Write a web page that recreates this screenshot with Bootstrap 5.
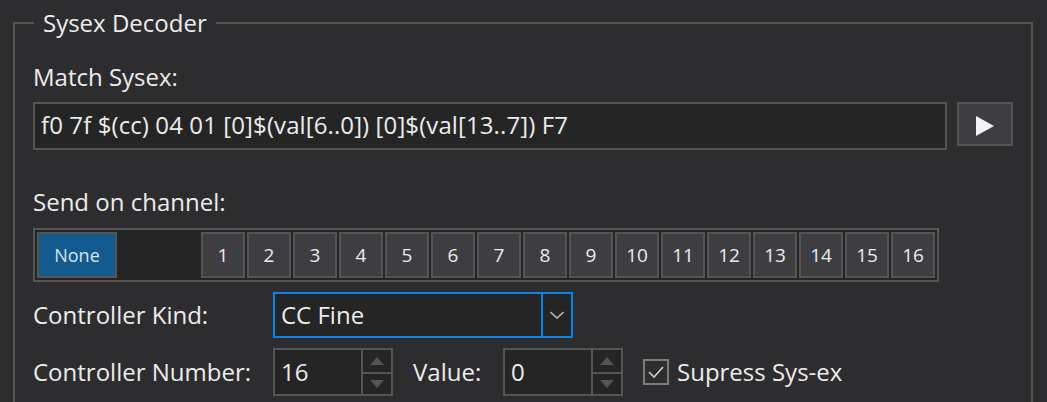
<!DOCTYPE html>
<html lang="en">
<head>
<meta charset="utf-8">
<title>Sysex Decoder</title>
<link href="https://cdn.jsdelivr.net/npm/bootstrap@5.3.0/dist/css/bootstrap.min.css" rel="stylesheet">
<style>
html,body{height:402px;overflow:hidden}
body{background:#2d2d30;color:#ececec;font-family:"Open Sans","Noto Sans",sans-serif;font-size:24px;line-height:32px}
.sx-panel{margin:7px 14px 0 13px;border:2px solid #555;padding:0 18px;height:500px;min-width:0}
.sx-panel legend{float:none;width:auto;margin:0 0 0 1px;padding:0 9px;font-size:24px;line-height:32px;color:#ececec}
.sx-label{line-height:32px;margin:0}
.sx-match-label{margin-top:22px;margin-bottom:9px}
.sx-box{background:#252526;border:2px solid #555;border-radius:0;color:#ececec;font-size:24px;line-height:32px;padding:0}
.sx-match-row{height:48px;gap:10px}
.sx-match{width:914px;height:48px;padding:5px 6px;box-shadow:none;letter-spacing:.1px}
.sx-play{width:56px;height:44px;background:#3e3e42;border:2px solid #555;border-radius:0;padding:0}
.sx-play svg{display:block;margin-top:4px}
.sx-channel-label{margin-top:36px;margin-bottom:10px}
.sx-bar{width:906px;height:54px;background:#252526;border:2px solid #555;padding:2px;gap:2px}
.sx-ch{width:44px;height:46px;background:#3e3e42;border:2px solid #555;border-radius:0;padding:0;color:#ececec;font-size:19px;line-height:24px}
.sx-none{width:80px;background:#135a8f;color:#d5e3ef;font-size:18px;margin-right:82px}
.sx-row1{margin-top:10px;height:46px}
.sx-row2{margin-top:10px;height:48px}
.sx-kind-label{width:240px}
.sx-combo{width:300px;height:46px;background:#252526;border:2px solid #0a84e8}
.sx-combo-text{padding:5px 6px;line-height:32px}
.sx-combo-btn{width:30px;border-left:2px solid #0a84e8}
.sx-spin{width:120px;height:48px;background:#252526;border:2px solid #555}
.sx-spin-text{padding:6px 6px;line-height:32px}
.sx-spin-btns{width:30px;border-left:2px solid #555}
.sx-spin-btns>div{height:50%}
.sx-spin-btns>div+div{border-top:2px solid #555}
.sx-value{width:90px;margin-left:20px}
.sx-check{width:26px;height:26px;border:2px solid #7a7a7a;background:#2d2d30;margin:0 8px 0 20px;padding:0}
</style>
</head>
<body>
<fieldset class="sx-panel">
  <legend>Sysex Decoder</legend>
  <p class="sx-label sx-match-label">Match Sysex:</p>
  <div class="d-flex align-items-start sx-match-row">
    <div class="form-control sx-box sx-match text-nowrap">f0 7f $(cc) 04 01 [0]$(val[6..0]) [0]$(val[13..7]) F7</div>
    <button type="button" class="btn sx-play d-flex align-items-center justify-content-center" aria-label="Run">
      <svg width="18" height="20" viewBox="0 0 18 20"><path d="M0 0 L18 10 L0 20Z" fill="#f4f4f4"/></svg>
    </button>
  </div>
  <p class="sx-label sx-channel-label">Send on channel:</p>
  <div class="d-flex sx-bar">
    <button type="button" class="btn sx-ch sx-none">None</button>
    <button type="button" class="btn sx-ch">1</button>
    <button type="button" class="btn sx-ch">2</button>
    <button type="button" class="btn sx-ch">3</button>
    <button type="button" class="btn sx-ch">4</button>
    <button type="button" class="btn sx-ch">5</button>
    <button type="button" class="btn sx-ch">6</button>
    <button type="button" class="btn sx-ch">7</button>
    <button type="button" class="btn sx-ch">8</button>
    <button type="button" class="btn sx-ch">9</button>
    <button type="button" class="btn sx-ch">10</button>
    <button type="button" class="btn sx-ch">11</button>
    <button type="button" class="btn sx-ch">12</button>
    <button type="button" class="btn sx-ch">13</button>
    <button type="button" class="btn sx-ch">14</button>
    <button type="button" class="btn sx-ch">15</button>
    <button type="button" class="btn sx-ch">16</button>
  </div>
  <div class="d-flex align-items-center sx-row1">
    <span class="sx-kind-label">Controller Kind:</span>
    <div class="d-flex sx-combo">
      <div class="flex-grow-1 sx-combo-text">CC Fine</div>
      <div class="sx-combo-btn d-flex align-items-center justify-content-center">
        <svg width="14" height="8" viewBox="0 0 14 8"><path d="M0.5 1 L7 7 L13.5 1" fill="none" stroke="#b4b4b4" stroke-width="1.6"/></svg>
      </div>
    </div>
  </div>
  <div class="d-flex align-items-center sx-row2">
    <span class="sx-kind-label">Controller Number:</span>
    <div class="d-flex sx-spin">
      <div class="flex-grow-1 sx-spin-text">16</div>
      <div class="sx-spin-btns d-flex flex-column">
        <div class="d-flex align-items-center justify-content-center"><svg width="14" height="8" viewBox="0 0 14 8"><path d="M7 0 L14 8 L0 8Z" fill="#555"/></svg></div>
        <div class="d-flex align-items-center justify-content-center"><svg width="14" height="8" viewBox="0 0 14 8"><path d="M0 0 L14 0 L7 8Z" fill="#555"/></svg></div>
      </div>
    </div>
    <span class="sx-value">Value:</span>
    <div class="d-flex sx-spin">
      <div class="flex-grow-1 sx-spin-text">0</div>
      <div class="sx-spin-btns d-flex flex-column">
        <div class="d-flex align-items-center justify-content-center"><svg width="14" height="8" viewBox="0 0 14 8"><path d="M7 0 L14 8 L0 8Z" fill="#555"/></svg></div>
        <div class="d-flex align-items-center justify-content-center"><svg width="14" height="8" viewBox="0 0 14 8"><path d="M0 0 L14 0 L7 8Z" fill="#555"/></svg></div>
      </div>
    </div>
    <div class="sx-check d-flex align-items-center justify-content-center">
      <svg width="16" height="14" viewBox="0 0 16 14"><path d="M1 7 L6 12 L15 2" fill="none" stroke="#d0d0d0" stroke-width="1.6"/></svg>
    </div>
    <span>Supress Sys-ex</span>
  </div>
</fieldset>
</body>
</html>
